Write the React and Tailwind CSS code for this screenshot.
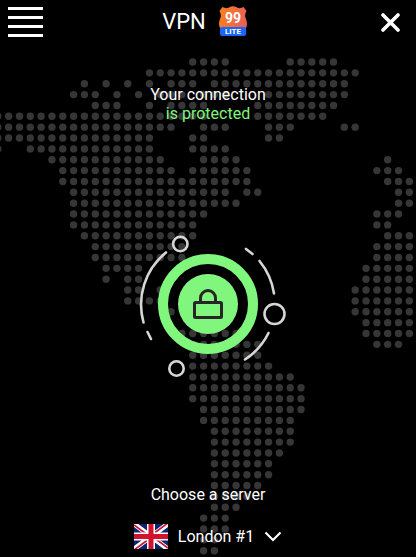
const COL_PITCH = 10.83;
const ROW_PITCH = 10.86;

// Each row lists the [first, last] column spans that carry a dot.
const LAND = [
  [[18, 21], [27, 31]],
  [[14, 33]],
  [[8, 8], [10, 10], [12, 12], [14, 14], [16, 18], [20, 32]],
  [[7, 9], [11, 11], [13, 13], [15, 17], [19, 21], [25, 32]],
  [[9, 11], [14, 14], [16, 19], [24, 31]],
  [[0, 19], [24, 30]],
  [[0, 16], [19, 21], [25, 27], [32, 33]],
  [[0, 14], [18, 19], [25, 26]],
  [[0, 0], [3, 14], [18, 21]],
  [[5, 15], [19, 22], [36, 36]],
  [[6, 16], [18, 23], [35, 37]],
  [[6, 23], [36, 38]],
  [[7, 21], [23, 24], [37, 38]],
  [[7, 22], [37, 38]],
  [[7, 19], [35, 37]],
  [[7, 18], [35, 36]],
  [[8, 18], [36, 38]],
  [[9, 17], [35, 38]],
  [[9, 17], [35, 38]],
  [[10, 13], [34, 38]],
  [[10, 10], [12, 13], [34, 38]],
  [[12, 13], [15, 15], [33, 38]],
  [[12, 15], [33, 38]],
  [[16, 16], [33, 38]],
  [[34, 38]],
  [[17, 22], [34, 38]],
  [[18, 24], [35, 37]],
  [[18, 24]],
  [[18, 25]],
  [[18, 27]],
  [[18, 28]],
  [[18, 28]],
  [[19, 28]],
  [[19, 27]],
  [[20, 27]],
  [[20, 27]],
  [[20, 26]],
  [[20, 25]],
  [[20, 25]],
  [[20, 24]],
  [[20, 23]],
  [[20, 22]],
  [[19, 21]],
  [[19, 21]],
  [[19, 20]],
  [[19, 20]],
];

function DottedMap() {
  return (
    <svg
      aria-hidden="true"
      viewBox="0 0 416 557"
      preserveAspectRatio="xMidYMin slice"
      className="absolute inset-0 size-full"
      fill="#363636"
    >
      {LAND.flatMap((spans, row) =>
        spans.flatMap(([from, to]) =>
          Array.from({ length: to - from + 1 }, (_, i) => (
            <circle
              key={`${row}-${from + i}`}
              cx={-2.2 + (from + i) * COL_PITCH}
              cy={62 + row * ROW_PITCH}
              r="3.7"
            />
          )),
        ),
      )}
    </svg>
  );
}

function Logo() {
  return (
    <svg aria-hidden="true" viewBox="0 0 30 30" className="mb-[2px] size-[30px]">
      <defs>
        <linearGradient id="shield" x1="0" y1="0" x2="1" y2="0.3">
          <stop offset="0" stopColor="#fb8217" />
          <stop offset="1" stopColor="#e8605a" />
        </linearGradient>
      </defs>
      <path
        d="M4.5 1 Q8 3 11 1.5 Q15 -.8 19 1.5 Q22 3 25.5 1 L28.5 5 Q26 9 28 13 Q30 18 28 22 L26 26 H4 L2 22 Q0 18 2 13 Q4 9 1.5 5 Z"
        fill="url(#shield)"
      />
      <rect x="2" y="21" width="26" height="9" rx="2" fill="#1b66f5" />
      <text
        x="15"
        y="17"
        textAnchor="middle"
        className="font-['Roboto',sans-serif] text-[14px] font-bold"
        fill="#fff"
      >
        99
      </text>
      <text
        x="15"
        y="28"
        textAnchor="middle"
        className="font-['Roboto',sans-serif] text-[8px] font-bold"
        fill="#fff"
      >
        LITE
      </text>
    </svg>
  );
}

function ProtectionDial() {
  return (
    <svg aria-hidden="true" viewBox="0 0 165 160" className="h-[160px] w-[165px]">
      <g fill="none" stroke="#d6d6d6" strokeWidth="2.6" strokeLinecap="round">
        <path d="M36 27.5 A67 67 0 0 0 13.5 97.5" />
        <path d="M17.5 107 L21 114" />
        <path d="M116 24 L122.5 29" />
        <path d="M129.5 36 A67 67 0 0 1 144 68.5" />
        <path d="M138.5 108 A67 67 0 0 1 115 134.5" />
        <circle cx="50.3" cy="19" r="7.2" />
        <circle cx="144.5" cy="89" r="10" />
        <circle cx="46.5" cy="143.5" r="7.2" />
      </g>
      <circle cx="78" cy="79" r="45" fill="none" stroke="#80f77c" strokeWidth="10" />
      <circle cx="78" cy="79" r="30" fill="#80f77c" />
      <g fill="none" stroke="#262626" strokeWidth="3" strokeLinejoin="round">
        <rect x="64.5" y="77.5" width="27" height="15" rx="1" />
        <path d="M70.5 77 V73 A7.5 7.5 0 0 1 85.5 73 V77" />
      </g>
    </svg>
  );
}

function UnionJack() {
  return (
    <svg aria-hidden="true" viewBox="0 0 34 25" className="h-[25px] w-[34px]">
      <rect width="34" height="25" fill="#0b2472" />
      <path d="M0 0 L34 25 M34 0 L0 25" stroke="#fff" strokeWidth="5" />
      <path
        d="M0 1 L17 13.5 M17 11.5 L34 24 M34 -1 L17 11.5 M17 13.5 L0 26"
        stroke="#d0142f"
        strokeWidth="1.7"
      />
      <path d="M17 0 V25 M0 12.5 H34" stroke="#fff" strokeWidth="8" />
      <path d="M17 0 V25 M0 12.5 H34" stroke="#d0142f" strokeWidth="5" />
    </svg>
  );
}

export default function App() {
  return (
    <div className="relative flex min-h-screen flex-col overflow-hidden bg-black font-['Roboto',sans-serif] text-white">
      <DottedMap />
      <header className="relative grid grid-cols-[1fr_auto_1fr] items-center px-2 pt-1">
        <button type="button" aria-label="Menu" className="flex w-[35px] flex-col gap-[6px]">
          <span className="h-[3px] w-full bg-white" />
          <span className="h-[3px] w-full bg-white" />
          <span className="h-[3px] w-full bg-white" />
          <span className="h-[3px] w-full bg-white" />
        </button>
        <h1 className="flex items-center gap-3 pr-[6px] text-[22px] leading-9">
          VPN
          <Logo />
        </h1>
        <button type="button" aria-label="Close" className="justify-self-end p-2">
          <svg viewBox="0 0 19 19" className="size-[19px]" fill="none" stroke="#fff" strokeWidth="3.6" strokeLinecap="round">
            <path d="M2 2 L17 17 M17 2 L2 17" />
          </svg>
        </button>
      </header>

      <main className="relative flex flex-1 flex-col items-center">
        <p className="mt-[45px] text-center text-base leading-[19px]">
          Your connection
          <br />
          <span className="text-[#80f77c]">is protected</span>
        </p>
        <button type="button" aria-label="Disconnect" className="mt-[102px] pl-[9px]">
          <ProtectionDial />
        </button>
      </main>

      <footer className="relative flex flex-col items-center pb-2">
        <p className="text-base leading-5">Choose a server</p>
        <button type="button" className="mt-[19px] flex items-center gap-[10px] text-base leading-[25px]">
          <UnionJack />
          London #1
          <svg aria-hidden="true" viewBox="0 0 18 11" className="h-[11px] w-[18px]" fill="none" stroke="#fff" strokeWidth="2.2">
            <path d="M1.5 1.5 L9 9 L16.5 1.5" />
          </svg>
        </button>
      </footer>
    </div>
  );
}
